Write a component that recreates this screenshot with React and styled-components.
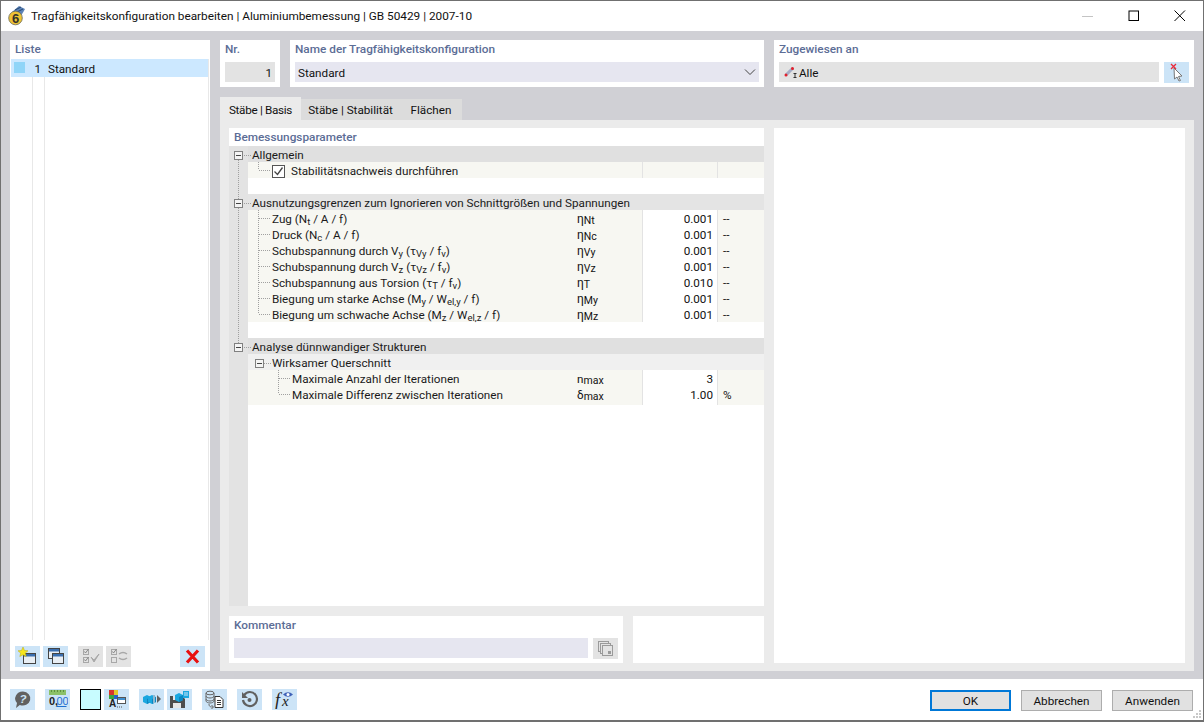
import React from 'react';
import styled, { createGlobalStyle } from 'styled-components';

const Global = createGlobalStyle`
  html, body { margin: 0; padding: 0; background: #fff; }
  body { font-family: Roboto, "Noto Sans", "Liberation Sans", sans-serif; font-size: 11.7px; color: #111; }
  * { box-sizing: border-box; }
`;

const Win = styled.div`
  width: 1204px; height: 722px; display: flex; flex-direction: column;
  border: 1px solid #707070; border-bottom-width: 2px; background: #fff; position: relative; overflow: hidden;
`;
const TitleBar = styled.div`height: 30px; display: flex; align-items: center; padding-left: 7px; background: #fff; flex: none;`;
const TitleText = styled.div`margin-left: 5px; font-size: 11.8px; flex: 1; white-space: nowrap; color: #111;`;
const WinBtn = styled.div`width: 46px; height: 30px; display: flex; align-items: center; justify-content: center;`;

const Main = styled.div`flex: 1; min-height: 0; background: #d0d0d5; padding: 9px 9px 8px; display: flex; gap: 10px;`;
const ListPanel = styled.div`width: 200px; background: #fff; display: flex; flex-direction: column;`;
const Label = styled.div`font-weight: 500; font-size: 11.8px; color: #5c6d96; height: 19px; line-height: 18px; padding-left: 5px; white-space: nowrap;`;
const ListBody = styled.div`
  flex: 1; margin: 0 1px; display: flex; flex-direction: column;
  background-image: linear-gradient(#e8e8e8,#e8e8e8), linear-gradient(#e8e8e8,#e8e8e8), linear-gradient(#e8e8e8,#e8e8e8);
  background-size: 1px 100%; background-repeat: no-repeat; background-position: 21px 0, 33px 0, 197px 0;
`;
const ListRow = styled.div`height: 18px; background: #cce8ff; width: 197px; display: flex; align-items: flex-start; line-height: 20px;`;
const Swatch = styled.span`width: 11px; height: 11px; background: #90d5f8; margin: 3px 0 0 3px;`;
const ListNo = styled.span`width: 16px; text-align: right; margin-right: 7px;`;
const ListFooter = styled.div`height: 31px; padding: 6px 5px 4px; display: flex; flex: none;`;
const Btn = styled.div`
  width: 25px; height: 21px; flex: none; display: flex; align-items: center; justify-content: center;
  background: ${p => (p.$off ? '#e3e3e3' : '#cce4f7')};
  margin-left: ${p => p.$ml || 0}px;
`;

const Right = styled.div`flex: 1; display: flex; flex-direction: column; min-width: 0;`;
const TopRow = styled.div`display: flex; gap: 10px; height: 47px; flex: none;`;
const TopCard = styled.div`background: #fff; width: ${p => p.$w}px; flex: none; display: flex; flex-direction: column;`;
const FieldRow = styled.div`display: flex; gap: 5px; padding: 3px 5px 0;`;
const Field = styled.div`
  flex: 1; height: ${p => p.$h || 20}px; background: ${p => p.$bg || '#e3e3e3'};
  display: flex; align-items: center; padding: 2px 3px 0; line-height: 18px;
  justify-content: ${p => (p.$end ? 'flex-end' : 'flex-start')};
`;
const FieldIcon = styled.span`display: flex; margin: -2px 0 0 2px;`;
const AssignText = styled.span`margin-left: 1px;`;
const SelectText = styled.span`flex: 1;`;
const Chevron = styled.svg`margin-top: -2px; display: block;`;
const Tabs = styled.div`display: flex; align-items: flex-end; height: 33px; flex: none;`;
const Tab = styled.div`
  height: ${p => (p.$on ? 23 : 21)}px; width: ${p => p.$w}px; background: ${p => (p.$on ? '#ebebeb' : '#dcdcdc')};
  display: flex; align-items: center; justify-content: center; white-space: nowrap;
  padding-top: ${p => (p.$on ? 2 : 1)}px;
  letter-spacing: ${p => p.$ls || 0}px;
`;
const TabBody = styled.div`flex: 1; min-height: 0; background: #ebebeb; padding: 8px 9px; display: flex; gap: 10px;`;
const LeftCol = styled.div`width: 535px; flex: none; display: flex; flex-direction: column; gap: 10px;`;
const TreeCard = styled.div`flex: 1; min-height: 0; background: #fff; display: flex; flex-direction: column;`;
const CardTitle = styled(Label)`height: 18px; line-height: 19px;`;
const RightCard = styled.div`flex: 1; background: #fff;`;
const BottomRow = styled.div`display: flex; gap: 10px; height: 47px; flex: none;`;
const CommentCard = styled.div`width: 394px; background: #fff; display: flex; flex-direction: column;`;
const BlankCard = styled.div`flex: 1; background: #fff;`;

const Row = styled.div`
  height: 16px; flex: none; display: grid; grid-template-columns: 343px 70px 75px 47px; line-height: 19px;
  white-space: nowrap;
`;
const NameCell = styled.div`
  display: flex; background: ${p => p.$bg}; grid-column: ${p => (p.$full ? '1 / -1' : 'auto')};
`;
const NameText = styled.span`display: block; color: #1a1a1a;`;
const Glyph = styled.svg`
  flex: none; display: block; height: 16px;
  background: linear-gradient(#e3e3e3,#e3e3e3) no-repeat left / 19px 100%;
`;
const Cell = styled.div`
  background: ${p => p.$bg || '#f7f7f2'};
  padding: ${p => p.$pad || '0'};
  text-align: ${p => p.$align || 'left'};
  border-left: ${p => (p.$line ? '1px solid #e3e3e3' : 'none')};
`;
const Sub = styled.span`font-size: 9.5px; position: relative; top: 2px;`;
const SymSub = styled.span`font-size: 10.5px; position: relative; top: 1px;`;
const Sym = styled.span`font-size: 12px;`;
const Filler = styled.div`flex: 1; background: linear-gradient(#e3e3e3,#e3e3e3) no-repeat left / 19px 100%;`;
const Check = styled.span`width: 13px; height: 13px; border: 1px solid #555; margin: 3px 6px 0 0; display: flex; flex: none; background: #fff;`;

const Footer = styled.div`height: 41px; flex: none; display: flex; align-items: flex-start; padding: 10px 10px 0 9px; background: #fff;`;
const FooterLeft = styled.div`flex: 1; display: flex;`;
const ColorBox = styled.div`width: 21px; height: 21px; border: 1px solid #000; background: #c8fcff; margin-left: 10px;`;
const DBtn = styled.div`
  width: 81px; height: 21px; margin-top: 1px; background: #e1e1e1; border: ${p => (p.$def ? '2px solid #0078d7' : '1px solid #adadad')};
  display: flex; align-items: center; justify-content: center; margin-left: ${p => p.$ml || 0}px;
`;
const Grip = styled.svg`position: absolute; right: 1px; bottom: 1px; display: block;`;

const dot = { stroke: '#a0a0a0', strokeWidth: 1, strokeDasharray: '1 1', fill: 'none' };

function Expander({ x }) {
  return (
    <g>
      <rect x={x + 0.5} y={5.5} width={8} height={8} fill="#f4f4f4" stroke="#808080" />
      <line x1={x + 2} x2={x + 7} y1={9.5} y2={9.5} stroke="#444" />
    </g>
  );
}

function Tree({ kind, top, bottom, last, width }) {
  return (
    <Glyph width={width} viewBox={`0 0 ${width} 16`}>
      {top && <line x1="9.5" x2="9.5" y1="0" y2={kind === 'group' ? 5 : 16} {...dot} />}
      {bottom && kind === 'group' && <line x1="9.5" x2="9.5" y1="14" y2="16" {...dot} />}
      {kind === 'group' && <><Expander x={5} /><line x1="15" x2="22" y1="9.5" y2="9.5" {...dot} /></>}
      {kind === 'leaf' && <><line x1="29.5" x2="29.5" y1="0" y2={last ? 8 : 16} {...dot} /><line x1="30" x2="41" y1="8.5" y2="8.5" {...dot} /></>}
      {kind === 'sub' && <><Expander x={26} /><line x1="35" x2="42" y1="9.5" y2="9.5" {...dot} /></>}
      {kind === 'leaf2' && <><line x1="49.5" x2="49.5" y1="0" y2={last ? 8 : 16} {...dot} /><line x1="50" x2="61" y1="8.5" y2="8.5" {...dot} /></>}
    </Glyph>
  );
}

const eta = s => <><Sym>η</Sym><SymSub>{s}</SymSub></>;

const limits = [
  [<>Zug (N<Sub>t</Sub> / A / f)</>, 'Nt', '0.001'],
  [<>Druck (N<Sub>c</Sub> / A / f)</>, 'Nc', '0.001'],
  [<>Schubspannung durch V<Sub>y</Sub> (τ<Sub>Vy</Sub> / f<Sub>v</Sub>)</>, 'Vy', '0.001'],
  [<>Schubspannung durch V<Sub>z</Sub> (τ<Sub>Vz</Sub> / f<Sub>v</Sub>)</>, 'Vz', '0.001'],
  [<>Schubspannung aus Torsion (τ<Sub>T</Sub> / f<Sub>v</Sub>)</>, 'T', '0.010'],
  [<>Biegung um starke Achse (M<Sub>y</Sub> / W<Sub>el,y</Sub> / f)</>, 'My', '0.001'],
  [<>Biegung um schwache Achse (M<Sub>z</Sub> / W<Sub>el,z</Sub> / f)</>, 'Mz', '0.001'],
];

function DataCells({ sym, value, unit }) {
  return (
    <>
      <Cell $pad="0 0 0 5px">{sym}</Cell>
      <Cell $bg={value ? '#fff' : undefined} $align="right" $pad="0 4px 0 0" $line>{value}</Cell>
      <Cell $pad="0 0 0 5px" $line>{unit}</Cell>
    </>
  );
}

/* ---- icons ---- */
const S = p => <svg width="21" height="19" viewBox="0 0 21 19" {...p} />;
const IHelp = () => <S><path d="M11 1.500a7.500 7 0 1 1-3.200 13.400L4 18l1-5A7.500 7 0 0 1 11 1.500z" fill="#616161" /><text x="11" y="12.500" fontSize="11.500" fontWeight="700" fontStyle="italic" textAnchor="middle" fill="#cce4f7" fontFamily="Liberation Sans">?</text></S>;
const IZero = () => <S><rect x="2" y="0" width="17" height="5" fill="#8cc168" /><path d="M4.500 0v2M7.500 0v2M10.500 0v2M13.500 0v2M16.500 0v2" stroke="#5c8f3e" /><text x="2" y="14.500" fontSize="11" fontWeight="700" fontFamily="Liberation Sans" fill="#222">0,</text><text x="9.500" y="14.500" fontSize="11" fontFamily="Liberation Sans" fill="#1f6fd0">00</text><path d="M9.500 16.500h10" stroke="#1f6fd0" /></S>;
const IStyle = () => <S><rect x="3" y="0" width="5" height="5" fill="#d8352a" /><rect x="8" y="0" width="4" height="5" fill="#e3c92a" /><rect x="3" y="5" width="5" height="4" fill="#3aa640" /><rect x="8" y="5" width="4" height="4" fill="#2a62c8" /><text x="3" y="17" fontSize="10" fontWeight="700" fontFamily="Liberation Sans" fill="#222">A</text><rect x="11.500" y="7.500" width="8" height="6" fill="#fff" stroke="#555" /><rect x="12" y="8" width="7" height="2" fill="#3f8fd0" /><path d="M11 17h1M13 17h1M15 17h1" stroke="#555" /></S>;
const Cube = ({ x = 0, y = 0 }) => <g transform={`translate(${x} ${y})`}><path d="M0 4l4-2 4 2v5l-4 2-4-2z" fill="#1aa7e0" /><path d="M4 6v5l4-2V4z" fill="#0d86c0" /></g>;
const ICubeArrow = () => <S><Cube x={2} y={3} /><Cube x={7} y={3} /><rect x="12" y="5" width="2" height="8" fill="#8fb8d0" /><path d="M16 5l4 4-4 4z" fill="#616161" /></S>;
const IFloppy = () => <S><path d="M1 6h12l3 3v9H1z" fill="#4d4d4d" /><rect x="4" y="6" width="7" height="4" fill="#e6e6e6" /><rect x="4" y="13" width="8" height="5" fill="#e6e6e6" /><Cube x={6} y={1} /><path d="M14 1h6v7h-6z" fill="#1aa7e0" /><path d="M15 3h4M15 5h4" stroke="#cce4f7" /></S>;
const IDb = () => <S><ellipse cx="6" cy="3" rx="4" ry="1.800" fill="none" stroke="#666" /><path d="M2 3v8c0 1 2 2 4 2s4-1 4-2V3M2 6c0 1 2 2 4 2s4-1 4-2M2 9c0 1 2 2 4 2s4-1 4-2" fill="none" stroke="#666" /><path d="M5 14c0 3 2 3 4 3M7.500 15l2 2-2 2" fill="none" stroke="#666" /><path d="M11 6.500h5l3 3v8h-8z" fill="#fff" stroke="#333" /><path d="M13 10.500h4M13 12.500h4M13 14.500h4" stroke="#333" /></S>;
const IReset = () => <S><path d="M5.200 5a7 7 0 1 1-1.200 5" fill="none" stroke="#616161" strokeWidth="2.200" /><path d="M3 2v6h6z" fill="#616161" /><circle cx="10.500" cy="10" r="2" fill="#616161" /></S>;
const IFx = () => <S><text x="1" y="16" fontSize="18" fontStyle="italic" fontFamily="Liberation Serif" fill="#222">f</text><text x="8" y="16" fontSize="15" fontStyle="italic" fontFamily="Liberation Serif" fill="#222">x</text><path d="M9 4.500q5-4.500 10 0q-5 4.500-10 0z" fill="#3f62b8" /><circle cx="14" cy="4.500" r="1.500" fill="#fff" /></S>;
const INew = () => <S><rect x="6.500" y="6.500" width="12" height="10" fill="#e8eef4" stroke="#444" /><rect x="7" y="7" width="11" height="2.500" fill="#3a6fb0" /><path d="M6 0l1.500 3.500 3.500.3-2.700 2.300.9 3.400L6 7.800 2.800 9.500l.9-3.400L1 3.800l3.500-.3z" fill="#f6e61c" stroke="#b9a90c" strokeWidth=".5" /></S>;
const ICopy = () => <S><rect x="3.500" y="1.500" width="11" height="10" fill="#e8eef4" stroke="#444" /><rect x="4" y="2" width="10" height="2.500" fill="#3a6fb0" /><rect x="7.500" y="6.500" width="11" height="10" fill="#e8eef4" stroke="#444" /><rect x="8" y="7" width="10" height="2.500" fill="#3a6fb0" /></S>;
const ICheckAll = () => <S><rect x="3.500" y="2.500" width="5" height="5" fill="none" stroke="#a8a8a8" /><rect x="3.500" y="10.500" width="5" height="5" fill="none" stroke="#a8a8a8" /><path d="M4.500 4.500l1 1.500 3-4M4.500 12.500l1 1.500 3-4" fill="none" stroke="#888" /><path d="M11 10l3 3 5-6-5 8z" fill="#a8a8a8" stroke="#a8a8a8" /></S>;
const ICheckSwap = () => <S><rect x="3.500" y="2.500" width="5" height="5" fill="none" stroke="#a8a8a8" /><rect x="3.500" y="10.500" width="5" height="5" fill="none" stroke="#a8a8a8" /><path d="M4.500 4.500l1 1.500 3-4" fill="none" stroke="#888" /><path d="M11 7q4-3 8 0M11 11q4 3 8 0" fill="none" stroke="#a8a8a8" strokeWidth="1.500" /></S>;
const IDelete = () => <svg width="21" height="19" viewBox="0 0 21 19"><path d="M5 3.500l11 12M16 3.500l-11 12" stroke="#e81010" strokeWidth="3.200" /></svg>;
const IStack = () => <S><rect x="3.500" y="2.500" width="10" height="10" fill="none" stroke="#9a9a9a" /><rect x="5.500" y="4.500" width="10" height="10" fill="#e3e3e3" stroke="#9a9a9a" /><rect x="7.500" y="6.500" width="10" height="10" fill="#e3e3e3" stroke="#9a9a9a" /><rect x="13" y="12" width="3" height="3" fill="#9a9a9a" /></S>;
const ICursor = () => <S><path d="M8 5l8 8-3.500.5 2 4-1.500.5-2-4L8.500 16z" fill="#fff" stroke="#777" /><path d="M5 1l5 5M10 1L5 6" stroke="#ea2a3a" strokeWidth="1.300" /></S>;
const IMember = () => <svg width="14" height="14" viewBox="0 0 14 14"><path d="M2 10l7-7" stroke="#a4adc6" strokeWidth="3" /><circle cx="2" cy="10" r="1.500" fill="#e2202c" /><circle cx="8.500" cy="3.500" r="1.500" fill="#e2202c" /><path d="M9.500 8.500h3M11 8.500v4M9.500 12.500h3" stroke="#333" /></svg>;
const ILogo = () => <svg width="18" height="20" viewBox="0 0 18 20"><path d="M4 6L11 0l6 3-4 7z" fill="#5c83b8" /><path d="M7 4l6-3M9 6l6-3" stroke="#26466f" /><circle cx="7.500" cy="12" r="6.800" fill="#eec334" stroke="#6a6a5a" strokeWidth=".8" /><text x="7.500" y="16.500" fontSize="13" fontWeight="700" textAnchor="middle" fontFamily="Liberation Sans" fill="#33322a">6</text></svg>;

export default function App() {
  return (
    <>
      <Global />
      <Win>
        <TitleBar>
          <ILogo />
          <TitleText>Tragfähigkeitskonfiguration bearbeiten | Aluminiumbemessung | GB 50429 | 2007-10</TitleText>
          <WinBtn><svg width="12" height="12"><path d="M0 6.500h11" stroke="#c4c4c4" /></svg></WinBtn>
          <WinBtn><svg width="12" height="12"><rect x="1" y="1" width="9.500" height="9.500" fill="none" stroke="#000" /></svg></WinBtn>
          <WinBtn><svg width="12" height="12"><path d="M.5.500l10.500 10.500M11 .500L.5 11" stroke="#000" /></svg></WinBtn>
        </TitleBar>
        <Main>
          <ListPanel>
            <Label>Liste</Label>
            <ListBody>
              <ListRow><Swatch /><ListNo>1</ListNo><span>Standard</span></ListRow>
            </ListBody>
            <ListFooter>
              <Btn $ml={0}><INew /></Btn>
              <Btn $ml={3}><ICopy /></Btn>
              <Btn $off $ml={10}><ICheckAll /></Btn>
              <Btn $off $ml={3}><ICheckSwap /></Btn>
              <Btn $ml={49}><IDelete /></Btn>
            </ListFooter>
          </ListPanel>
          <Right>
            <TopRow>
              <TopCard $w={60}>
                <Label>Nr.</Label>
                <FieldRow><Field $end>1</Field></FieldRow>
              </TopCard>
              <TopCard $w={474}>
                <Label>Name der Tragfähigkeitskonfiguration</Label>
                <FieldRow>
                  <Field $bg="#e6e6f0">
                    <SelectText>Standard</SelectText>
                    <Chevron width="12" height="8" viewBox="0 0 12 8"><path d="M1 1.500l5 5 5-5" fill="none" stroke="#444" /></Chevron>
                  </Field>
                </FieldRow>
              </TopCard>
              <TopCard $w={420}>
                <Label>Zugewiesen an</Label>
                <FieldRow>
                  <Field><FieldIcon><IMember /></FieldIcon><AssignText>Alle</AssignText></Field>
                  <Btn><ICursor /></Btn>
                </FieldRow>
              </TopCard>
            </TopRow>
            <Tabs>
              <Tab $on $w={81} $ls={-0.3}>Stäbe | Basis</Tab>
              <Tab $w={99}>Stäbe | Stabilität</Tab>
              <Tab $w={62}>Flächen</Tab>
            </Tabs>
            <TabBody>
              <LeftCol>
                <TreeCard>
                  <CardTitle>Bemessungsparameter</CardTitle>
                  <Row>
                    <NameCell $bg="#e0e0e0" $full><Tree kind="group" bottom width={23} /><NameText>Allgemein</NameText></NameCell>
                  </Row>
                  <Row>
                    <NameCell $bg="#f7f7f2"><Tree kind="leaf" top last width={43} />
                      <Check><svg width="11" height="11" viewBox="0 0 11 11"><path d="M1.500 5.500l3 3 5-7" fill="none" stroke="#444" strokeWidth="1.300" /></svg></Check>
                      <NameText>Stabilitätsnachweis durchführen</NameText>
                    </NameCell>
                    <DataCells />
                  </Row>
                  <Row><NameCell $bg="#fff" $full><Tree kind="blank" top width={19} /></NameCell></Row>
                  <Row>
                    <NameCell $bg="#e4e4e4" $full><Tree kind="group" top bottom width={23} /><NameText>Ausnutzungsgrenzen zum Ignorieren von Schnittgrößen und Spannungen</NameText></NameCell>
                  </Row>
                  {limits.map(([l, s, v], i) => (
                    <Row key={s}>
                      <NameCell $bg="#f7f7f2"><Tree kind="leaf" top last={i === limits.length - 1} width={43} /><NameText>{l}</NameText></NameCell>
                      <DataCells sym={eta(s)} value={v} unit="--" />
                    </Row>
                  ))}
                  <Row><NameCell $bg="#fff" $full><Tree kind="blank" top width={19} /></NameCell></Row>
                  <Row>
                    <NameCell $bg="#e0e0e0" $full><Tree kind="group" top width={23} /><NameText>Analyse dünnwandiger Strukturen</NameText></NameCell>
                  </Row>
                  <Row>
                    <NameCell $bg="#f0f0f0" $full><Tree kind="sub" width={43} /><NameText>Wirksamer Querschnitt</NameText></NameCell>
                  </Row>
                  <Row>
                    <NameCell $bg="#f7f7f2"><Tree kind="leaf2" width={63} /><NameText>Maximale Anzahl der Iterationen</NameText></NameCell>
                    <DataCells sym={<>n<SymSub>max</SymSub></>} value="3" />
                  </Row>
                  <Row>
                    <NameCell $bg="#f7f7f2"><Tree kind="leaf2" last width={63} /><NameText>Maximale Differenz zwischen Iterationen</NameText></NameCell>
                    <DataCells sym={<>δ<SymSub>max</SymSub></>} value="1.00" unit="%" />
                  </Row>
                  <Filler />
                </TreeCard>
                <BottomRow>
                  <CommentCard>
                    <Label>Kommentar</Label>
                    <FieldRow>
                      <Field $bg="#e6e6f0" />
                      <Btn $off><IStack /></Btn>
                    </FieldRow>
                  </CommentCard>
                  <BlankCard />
                </BottomRow>
              </LeftCol>
              <RightCard />
            </TabBody>
          </Right>
        </Main>
        <Footer>
          <FooterLeft>
            <Btn><IHelp /></Btn>
            <Btn $ml={10}><IZero /></Btn>
            <ColorBox />
            <Btn $ml={3}><IStyle /></Btn>
            <Btn $ml={10}><ICubeArrow /></Btn>
            <Btn $ml={3}><IFloppy /></Btn>
            <Btn $ml={10}><IDb /></Btn>
            <Btn $ml={10}><IReset /></Btn>
            <Btn $ml={10}><IFx /></Btn>
          </FooterLeft>
          <DBtn $def>OK</DBtn>
          <DBtn $ml={10}>Abbrechen</DBtn>
          <DBtn $ml={10}>Anwenden</DBtn>
        </Footer>
        <Grip width="10" height="10" viewBox="0 0 10 10">
          <path d="M7 1h2v2H7zM4 4h2v2H4zM7 4h2v2H7zM1 7h2v2H1zM4 7h2v2H4zM7 7h2v2H7z" fill="#c8c8c8" />
        </Grip>
      </Win>
    </>
  );
}
